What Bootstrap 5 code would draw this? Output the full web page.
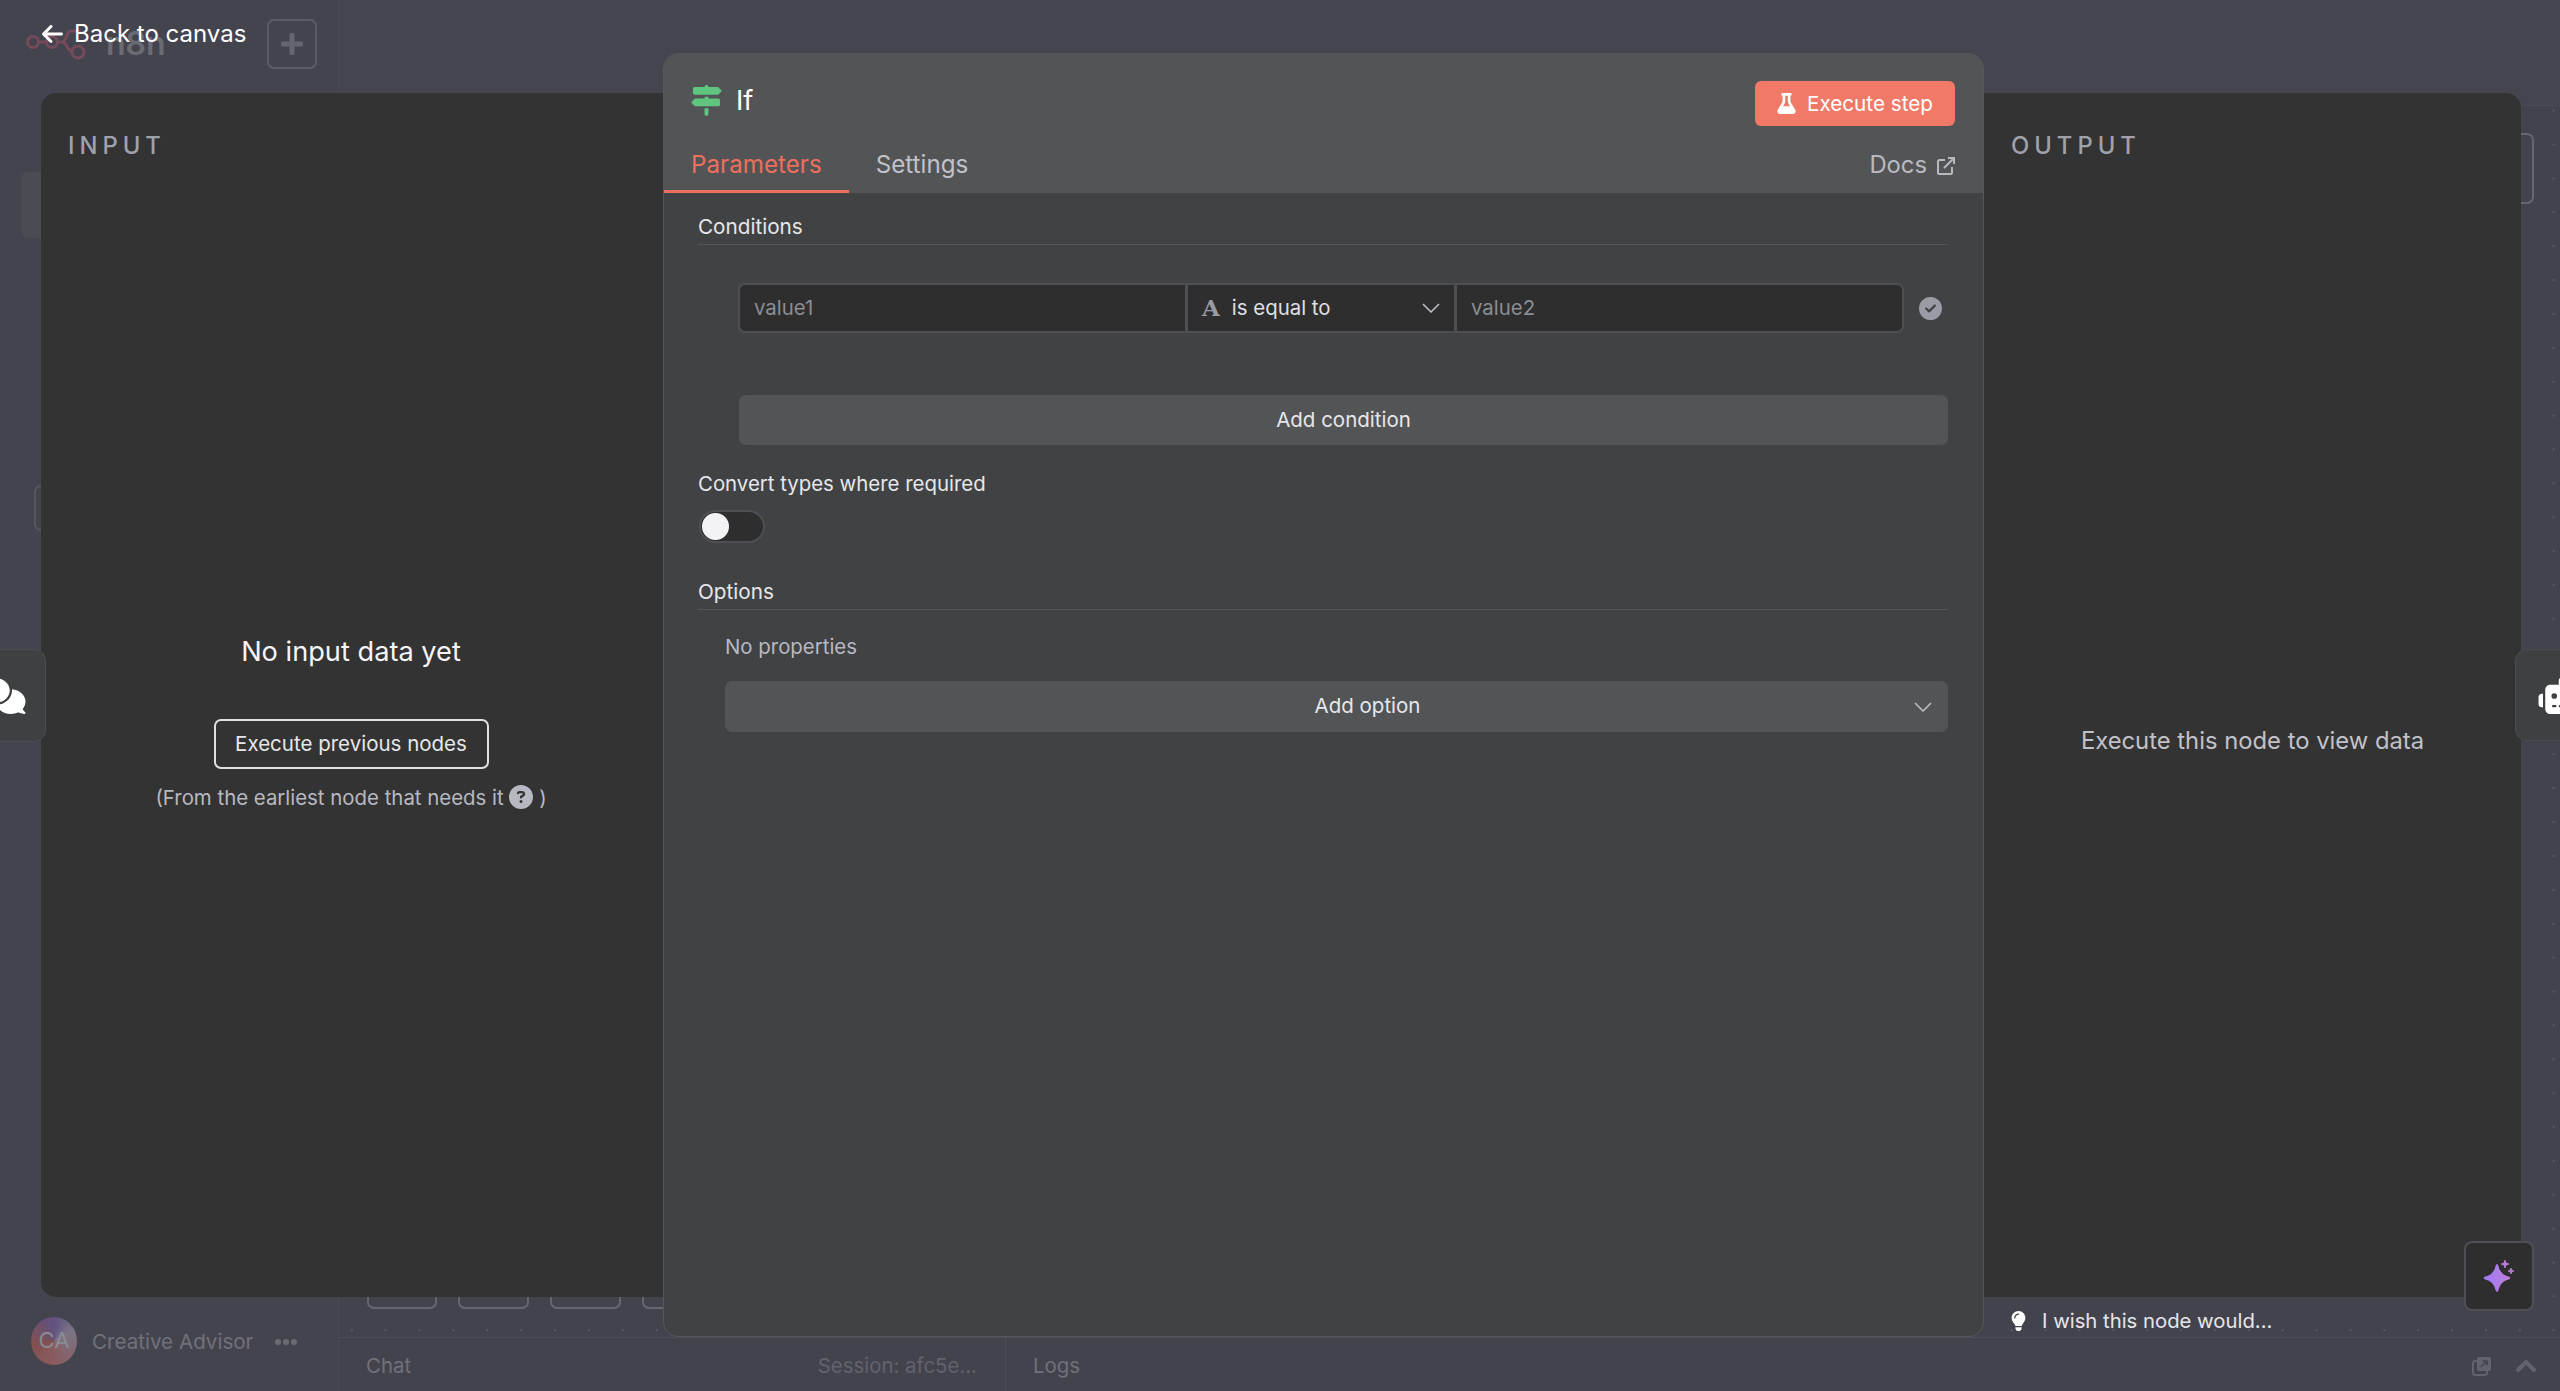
<!DOCTYPE html>
<html lang="en">
<head>
<meta charset="utf-8">
<title>If node</title>
<link href="https://cdn.jsdelivr.net/npm/bootstrap@5.3.0/dist/css/bootstrap.min.css" rel="stylesheet">
<style>
html,body{height:100%;margin:0;overflow:hidden}
body{background:#44444f;font-family:Inter,"Liberation Sans",sans-serif;font-size:20.4px;color:#e6e7ea}
.app-shell{height:1391px}
.side-rail{width:339px;flex:none;border-right:1px solid #4a4a55}
.rail-top{padding:19px 21px 0 26px;height:69px}
.brand-word{font-size:32px;font-weight:600;color:#6b6b74;line-height:1;margin-left:20px}
.add-box{width:50px;height:50px;border:2px solid #5c5c68;border-radius:7px}
.rail-item{height:66px;margin:103px 0 0 21px;width:280px;background:#4b4b54;border-radius:7px}
.rail-outline{height:46px;margin:247px 0 0 34px;width:60px;border:2px solid #56565f;border-radius:7px}
.rail-foot{padding:0 0 26px 31px;color:#71717a}
.avatar-disc{width:46px;height:48px;border-radius:50%;background:conic-gradient(from 60deg,#7b7584,#8a5b60 120deg,#82504f 200deg,#5f5180 300deg,#7b7584);color:#8b8b95;font-size:22px;line-height:46px;text-align:center}
.foot-name{margin-left:15px;font-size:20.6px;padding-top:2px}
.foot-dots{margin-left:22px;letter-spacing:0}
.foot-dots i{display:inline-block;width:6px;height:6px;border-radius:50%;background:#6b6b74;margin-right:2px;vertical-align:middle}
.canvas-head{height:106px;flex:none;border-bottom:1px solid #4a4a55;background:#45454f}
.canvas-area{background-color:#43434e;background-image:radial-gradient(circle at 1px 1px,#585864 1px,transparent 1.6px);background-size:33.88px 33.88px;background-position:11.800px 3.700px}
.canvas-node{position:absolute;border:2px solid #666671;border-radius:7px}
.node-a{left:28px;bottom:28px;width:70px;height:40px}
.node-b{left:119px;bottom:28px;width:71px;height:40px}
.node-c{left:211px;bottom:28px;width:71px;height:40px}
.node-d{left:303px;bottom:28px;width:70px;height:40px}
.node-e{right:26px;top:27px;width:70px;height:71px}
.dock-bar{height:54px;flex:none;border-top:1px solid #4d4d58;background:#43434d;color:#71717a}
.dock-chat{width:667px;flex:none;padding:3px 28px 0 27px;border-right:1px solid #4d4d58}
.dock-session{color:#62626c}
.dock-logs{padding:3px 24px 0 27px}
.overlay-layer{position:absolute;inset:0;padding:93px 39px 94px 41px}
.back-link{position:absolute;left:42px;top:17px;height:34px;gap:11px;color:#fff;font-size:24px;text-decoration:none}
.data-pane{background:#333;color:#c1c2c9}
.pane-in{width:622px;flex:none;border-radius:15px 0 0 15px;padding:39px 2px 0 27px}
.pane-out{width:537px;flex:none;border-radius:0 15px 15px 0;padding:39px 0 0 27px}
.pane-title{font-size:23.8px;line-height:28px;letter-spacing:5px;font-weight:500;color:#9fa1ab}
.empty-in{margin:478px 0 0 -27px}
.empty-head{font-size:27.2px;line-height:28px;color:#f5f5f7}
.btn-prev{margin-top:53px;height:50px;width:275px;background:transparent;border:2px solid #dfdfe4;border-radius:7px;color:#e6e7ea;font-size:20.500px;padding:0}
.empty-note{margin-top:15px;line-height:28px;color:#b7b9c2}
.empty-out{margin:567px 0 0 -27px;font-size:23.800px;line-height:28px;color:#c1c2c9}
.node-modal{width:1321px;flex:none;margin:-40px 0;background:#414244;border:1px solid #56575a;border-radius:15px;overflow:hidden;position:relative}
.modal-top{background:#535456;height:139px;flex:none}
.top-row{height:73px;padding:27px 28px 0 27px}
.if-name{font-size:27.2px;color:#fff;margin-left:14px;line-height:30px}
.btn-run{height:45px;width:200px;background:#f07a67;border:0;border-radius:6px;color:#fff;font-size:20.7px;padding:0;gap:11px}
.tab-row{height:66px}
.tab-row .nav-link{height:56px;margin-top:10px;padding:0 27px;border:0;background:none;color:#c1c2c9;font-size:24.200px;line-height:56px}
.tab-row .nav-link.active{color:#ee6f5c;box-shadow:inset 0 -3px 0 #ee6f5c}
.docs-link{margin-top:10px;height:56px;padding-right:28px;color:#b9bac1;font-size:23.800px;gap:10px;text-decoration:none}
.docs-link svg{margin-top:2px}
.modal-main{padding:20px 35px 0 34px}
.section-head{line-height:28px;padding-bottom:3px;border-bottom:1px solid #55565a;color:#e6e7ea;font-size:20.7px}
.cond-row{margin:38px 0 0 40px}
.cond-group{width:1166px;flex:none;height:50px}
.cond-group .form-control{height:50px;background:#2e2e2e;border:2px solid #4e4f52;color:#8b8d94;font-size:20.4px;padding:0 14px;line-height:46px;box-shadow:none;border-radius:7px}
.cond-check{margin-left:15px}
.cell-a{flex:0 0 449px !important;width:449px !important}
.cell-b{flex:0 0 270px !important;width:270px !important;color:#dfe0e3 !important;margin-left:-2px}
.cell-c{flex:0 0 449px !important;width:449px !important;margin-left:-2px}
.type-glyph{font-family:"DejaVu Serif",serif;font-weight:700;color:#9a9ca5;font-size:23px;margin-right:12px}
.btn-soft{display:block;background:#535456;border:0;border-radius:7px;color:#e6e7ea;font-size:20.500px;padding:0;position:relative}
.btn-soft:hover{background:#535456;color:#e6e7ea}
.btn-add-cond{margin:62px 0 0 41px;height:50px;width:calc(100% - 41px)}
.btn-add-opt{margin:20px 0 0 27px;height:51px;width:calc(100% - 27px);padding-left:62px}
.opt-chev{position:absolute;right:16px;top:21px}
.field-label{margin-top:25px;padding-bottom:1px;line-height:28px;color:#e6e7ea;font-size:20.400px}
.switch-wrap{margin:11px 0 0;padding:0;min-height:0;height:33px}
.switch-wrap .form-check-input{width:66px;height:33px;margin:0 0 0 1px;background-color:#2e2e2e;border:2px solid #4e4f55;background-image:radial-gradient(circle,#f2f2f7 0 13px,transparent 14px);background-size:29px 29px;background-position:left center;box-shadow:none;float:none}
.opt-head{margin-top:35px}
.no-props{margin:23px 0 1px 27px;line-height:28px;color:#b7b9c2}
.wish-line{position:absolute;left:2011px;top:1307px;gap:16px;color:#e6e6ea;font-size:20.3px;line-height:28px}
.side-tab{position:absolute;background:#3f4042;border:1px solid #4c4d52;overflow:hidden}
.tab-left{left:-10px;top:649px;width:56px;height:93px;border-radius:0 12px 12px 0}
.tab-left svg{position:absolute;left:-11px;top:28px}
.tab-right{left:2515px;top:649px;width:60px;height:92px;border-radius:12px 0 0 12px}
.tab-right svg{position:absolute;left:22px;top:28px}
.ai-box{position:absolute;left:2464px;top:1241px;width:70px;height:70px;background:#2e2e2e;border:2px solid #4f4f55;border-radius:8px}
</style>
</head>
<body>
<div class="app-shell d-flex position-relative">
  <aside class="side-rail d-flex flex-column">
    <div class="rail-top d-flex align-items-center">
      <svg width="60" height="32" viewBox="0 0 60 32" fill="none" stroke="#754a5a" stroke-width="3"><circle cx="7" cy="14" r="5.500"/><circle cx="26" cy="14" r="5.500"/><circle cx="52" cy="24" r="6"/><path d="M12.500 14H20.500M31.500 14H36c5 0 4-11 9-11h10M36 14c5 0 5 9 10 9"/></svg>
      <span class="brand-word">n8n</span>
      <div class="add-box d-flex align-items-center justify-content-center ms-auto">
        <svg width="22" height="22" viewBox="0 0 22 22"><path d="M11 2V20M2 11H20" stroke="#65656f" stroke-width="5" stroke-linecap="round"/></svg>
      </div>
    </div>
    <div class="rail-item"></div>
    <div class="rail-outline"></div>
    <div class="rail-foot d-flex align-items-center mt-auto">
      <div class="avatar-disc">CA</div>
      <span class="foot-name">Creative Advisor</span>
      <span class="foot-dots"><i></i><i></i><i></i></span>
    </div>
  </aside>
  <main class="d-flex flex-column flex-grow-1">
    <div class="canvas-head"></div>
    <div class="canvas-area flex-grow-1 position-relative">
      <div class="canvas-node node-a"></div>
      <div class="canvas-node node-b"></div>
      <div class="canvas-node node-c"></div>
      <div class="canvas-node node-d"></div>
      <div class="canvas-node node-e"></div>
    </div>
    <div class="dock-bar d-flex">
      <div class="dock-chat d-flex align-items-center justify-content-between">
        <span>Chat</span><span class="dock-session">Session: afc5e...</span>
      </div>
      <div class="dock-logs d-flex align-items-center flex-grow-1">
        <span>Logs</span>
        <svg class="ms-auto" width="20" height="20" viewBox="0 0 20 20" fill="none"><rect x="1" y="5" width="14" height="14" rx="2" stroke="#62626c" stroke-width="2"/><rect x="5" y="1" width="14" height="14" rx="2" fill="#62626c"/><path d="M9 11 15 5M10.500 5H15V9.500" stroke="#44444f" stroke-width="1.600"/></svg>
        <svg class="ms-4" width="20" height="12" viewBox="0 0 20 12" fill="none"><path d="M2 10 10 2 18 10" stroke="#62626c" stroke-width="4" stroke-linecap="round" stroke-linejoin="round"/></svg>
      </div>
    </div>
  </main>

  <div class="overlay-layer d-flex">
    <section class="data-pane pane-in">
      <div class="pane-title">INPUT</div>
      <div class="empty-in d-flex flex-column align-items-center text-center">
        <div class="empty-head">No input data yet</div>
        <button type="button" class="btn btn-prev">Execute previous nodes</button>
        <div class="empty-note">(From the earliest node that needs it
          <svg width="24" height="24" viewBox="0 0 512 512" fill="#b7b9c2" class="align-text-top"><path d="M256 512A256 256 0 1 0 256 0a256 256 0 1 0 0 512zM169.800 165.300c7.900-22.300 29.100-37.300 52.800-37.300h58.300c34.900 0 63.100 28.300 63.100 63.100c0 22.600-12.100 43.500-31.700 54.800L280 264.400c-.2 13-10.900 23.600-24 23.600c-13.300 0-24-10.700-24-24V250.500c0-8.600 4.600-16.500 12.100-20.800l44.300-25.400c4.700-2.700 7.600-7.700 7.600-13.100c0-8.400-6.800-15.100-15.100-15.100H222.600c-3.400 0-6.400 2.100-7.500 5.300l-.4 1.200c-4.400 12.500-18.200 19-30.600 14.600s-19-18.200-14.600-30.600l.4-1.200zM224 352a32 32 0 1 1 64 0 32 32 0 1 1 -64 0z"/></svg>
        )</div>
      </div>
    </section>

    <section class="node-modal d-flex flex-column">
      <header class="modal-top d-flex flex-column">
        <div class="top-row d-flex justify-content-between align-items-start">
          <div class="d-flex align-items-center mt-1">
            <svg width="31" height="31" viewBox="0 0 512 512" fill="#5fc57f"><path d="M224 32H64C46.300 32 32 46.300 32 64v64c0 17.700 14.300 32 32 32H441.400c4.200 0 8.300-1.700 11.300-4.700l48-48c6.200-6.200 6.200-16.400 0-22.600l-48-48c-3-3-7.100-4.700-11.300-4.700H288c0-17.700-14.300-32-32-32s-32 14.300-32 32zM480 256c0-17.700-14.300-32-32-32H288V192H224v32H70.600c-4.200 0-8.300 1.700-11.300 4.700l-48 48c-6.200 6.200-6.200 16.400 0 22.600l48 48c3 3 7.100 4.700 11.300 4.700H448c17.700 0 32-14.300 32-32V256zM288 480V384H224v96c0 17.700 14.300 32 32 32s32-14.300 32-32z"/></svg>
            <span class="if-name">If</span>
          </div>
          <button type="button" class="btn btn-run d-flex align-items-center justify-content-center">
            <svg width="19" height="21" viewBox="0 0 448 512" fill="#fff"><path d="M288 0H160 128C110.300 0 96 14.300 96 32s14.300 32 32 32V196.800c0 11.800-3.300 23.500-9.500 33.500L10.300 406.200C3.600 417.200 0 429.700 0 442.600C0 480.900 31.100 512 69.400 512H378.600c38.300 0 69.400-31.100 69.400-69.400c0-12.800-3.600-25.400-10.300-36.400L329.500 230.400c-6.200-10.100-9.500-21.700-9.500-33.500V64c17.700 0 32-14.300 32-32s-14.300-32-32-32H288zM192 196.800V64h64V196.800c0 23.700 6.600 46.900 19 67.100L309.500 320h-171L173 263.900c12.400-20.200 19-43.400 19-67.100z"/></svg>
            <span>Execute step</span>
          </button>
        </div>
        <div class="tab-row d-flex justify-content-between">
          <ul class="nav">
            <li class="nav-item"><a class="nav-link active" href="#">Parameters</a></li>
            <li class="nav-item"><a class="nav-link" href="#">Settings</a></li>
          </ul>
          <a class="docs-link d-flex align-items-center" href="#"><span>Docs</span>
            <svg width="18" height="18" viewBox="0 0 18 18" fill="none" stroke="#b9bac1" stroke-width="2"><path d="M8 3H2.500A1.500 1.500 0 0 0 1 4.500V15.500A1.500 1.500 0 0 0 2.500 17H13.500A1.500 1.500 0 0 0 15 15.500V10M7 11 17 1M11 1H17V7"/></svg>
          </a>
        </div>
      </header>
      <div class="modal-main">
        <div class="section-head">Conditions</div>
        <div class="cond-row d-flex align-items-center">
          <div class="input-group cond-group flex-nowrap">
            <div class="form-control cell-a">value1</div>
            <div class="form-control cell-b d-flex align-items-center">
              <span class="type-glyph">A</span><span>is equal to</span>
              <svg class="ms-auto" width="18" height="10" viewBox="0 0 18 10" fill="none"><path d="M1 1 9 9 17 1" stroke="#c1c2c9" stroke-width="1.500"/></svg>
            </div>
            <div class="form-control cell-c">value2</div>
          </div>
          <svg class="cond-check" width="23" height="23" viewBox="0 0 512 512" fill="#9a9ca5"><path d="M256 512A256 256 0 1 0 256 0a256 256 0 1 0 0 512zM369 209L241 337c-9.400 9.400-24.600 9.400-33.900 0l-64-64c-9.400-9.400-9.400-24.600 0-33.900s24.600-9.400 33.900 0l47 47L335 175c9.400-9.400 24.600-9.400 33.900 0s9.400 24.600 0 33.900z"/></svg>
        </div>
        <button type="button" class="btn btn-soft btn-add-cond">Add condition</button>
        <div class="field-label">Convert types where required</div>
        <div class="form-check form-switch switch-wrap"><input class="form-check-input" type="checkbox" role="switch" aria-label="Convert types where required"></div>
        <div class="section-head opt-head">Options</div>
        <div class="no-props">No properties</div>
        <button type="button" class="btn btn-soft btn-add-opt">Add option
          <svg class="opt-chev" width="18" height="10" viewBox="0 0 18 10" fill="none"><path d="M1 1 9 9 17 1" stroke="#c1c2c9" stroke-width="1.500"/></svg>
        </button>
      </div>
    </section>

    <section class="data-pane pane-out">
      <div class="pane-title">OUTPUT</div>
      <div class="empty-out text-center">Execute this node to view data</div>
    </section>
  </div>

  <a class="back-link d-flex align-items-center" href="#">
    <svg width="21" height="24" viewBox="0 0 448 512" fill="#fff"><path d="M9.400 233.400c-12.500 12.500-12.500 32.800 0 45.300l160 160c12.500 12.500 32.800 12.500 45.300 0s12.500-32.800 0-45.300L109.200 288 416 288c17.700 0 32-14.300 32-32s-14.300-32-32-32l-306.700 0L214.600 118.600c12.500-12.500 12.500-32.800 0-45.300s-32.800-12.500-45.300 0l-160 160z"/></svg>
    <span>Back to canvas</span>
  </a>

  <div class="side-tab tab-left">
    <svg width="46" height="36" viewBox="0 0 640 512" fill="#fff"><path d="M208 352c114.900 0 208-78.800 208-176S322.900 0 208 0S0 78.800 0 176c0 38.600 14.700 74.300 39.600 103.400c-3.500 9.400-8.700 17.700-14.200 24.700c-4.800 6.200-9.700 11-13.300 14.300c-1.800 1.600-3.300 2.900-4.300 3.700c-.5 .4-.9 .7-1.100 .8l-.2 .2 0 0 0 0C1 327.200-1.400 334.400 .8 340.900S9.100 352 16 352c21.800 0 43.800-5.600 62.100-12.500c9.200-3.500 17.800-7.400 25.300-11.400C134.100 343.300 169.800 352 208 352zM448 176c0 112.300-99.100 196.900-216.500 207C255.800 457.400 336.400 512 432 512c38.200 0 73.900-8.700 104.700-23.900c7.500 4 16 7.900 25.200 11.400c18.300 6.900 40.300 12.500 62.100 12.500c6.900 0 13.100-4.500 15.200-11.100c2.100-6.600-.2-13.800-5.800-17.900l0 0 0 0-.2-.2c-.2-.2-.6-.4-1.100-.8c-1-.8-2.500-2-4.300-3.700c-3.600-3.300-8.500-8.100-13.300-14.300c-5.500-7-10.700-15.400-14.200-24.700c24.900-29 39.600-64.700 39.600-103.400c0-92.800-84.900-168.900-192.600-175.500c.4 5.100 .6 10.300 .6 15.500z"/></svg>
  </div>
  <div class="side-tab tab-right">
    <svg width="46" height="36" viewBox="0 0 640 512" fill="#fff"><path d="M320 0c17.700 0 32 14.300 32 32V96H472c39.800 0 72 32.200 72 72V440c0 39.800-32.200 72-72 72H168c-39.800 0-72-32.200-72-72V168c0-39.800 32.200-72 72-72H288V32c0-17.700 14.300-32 32-32zM208 384c-8.800 0-16 7.200-16 16s7.200 16 16 16h32c8.800 0 16-7.200 16-16s-7.200-16-16-16H208zm96 0c-8.800 0-16 7.200-16 16s7.200 16 16 16h32c8.800 0 16-7.200 16-16s-7.200-16-16-16H304zm96 0c-8.800 0-16 7.200-16 16s7.200 16 16 16h32c8.800 0 16-7.200 16-16s-7.200-16-16-16H400zM264 256a40 40 0 1 0 -80 0 40 40 0 1 0 80 0zm152 40a40 40 0 1 0 0-80 40 40 0 1 0 0 80zM48 224H64V416H48c-26.500 0-48-21.500-48-48V272c0-26.500 21.500-48 48-48zm544 0c26.500 0 48 21.500 48 48v96c0 26.500-21.500 48-48 48H576V224h16z"/></svg>
  </div>

  <div class="wish-line d-flex align-items-center">
    <svg width="15" height="20" viewBox="0 0 384 512" fill="#fff"><path d="M272 384c9.600-31.900 29.500-59.100 49.200-86.200l0 0c5.200-7.100 10.400-14.200 15.400-21.400c19.800-28.500 31.400-63 31.400-100.300C368 78.800 289.200 0 192 0S16 78.800 16 176c0 37.300 11.600 71.900 31.400 100.300c5 7.200 10.200 14.300 15.400 21.400l0 0c19.800 27.100 39.700 54.400 49.200 86.200H272zM192 512c44.200 0 80-35.800 80-80V416H112v16c0 44.200 35.800 80 80 80zM112 176c0 8.800-7.200 16-16 16s-16-7.200-16-16c0-61.900 50.100-112 112-112c8.800 0 16 7.200 16 16s-7.200 16-16 16c-44.200 0-80 35.800-80 80z"/></svg>
    <span>I wish this node would...</span>
  </div>

  <div class="ai-box d-flex align-items-center justify-content-center">
    <svg width="40" height="40" viewBox="0 0 40 40"><defs><linearGradient id="sparkFill" x1="0" x2="1" y1="0" y2="0"><stop offset="0" stop-color="#9f7bf5"/><stop offset="1" stop-color="#bd7fdc"/></linearGradient></defs><path d="M18 9.500C19.500 17 23 20.500 30 22 23 23.500 19.500 27 18 34.500 16.500 27 13 23.500 6 22 13 20.500 16.500 17 18 9.500Z" fill="url(#sparkFill)" stroke="url(#sparkFill)" stroke-width="2.400" stroke-linejoin="round"/><path d="M26 4 27 7 30 8 27 9 26 12 25 9 22 8 25 7ZM32 12 32.800 14.200 35 15 32.800 15.800 32 18 31.200 15.800 29 15 31.200 14.200Z" fill="#bd7fdc" stroke="#bd7fdc" stroke-width=".8" stroke-linejoin="round"/></svg>
  </div>
</div>
<script src="https://cdn.jsdelivr.net/npm/bootstrap@5.3.0/dist/js/bootstrap.bundle.min.js"></script>
</body>
</html>
